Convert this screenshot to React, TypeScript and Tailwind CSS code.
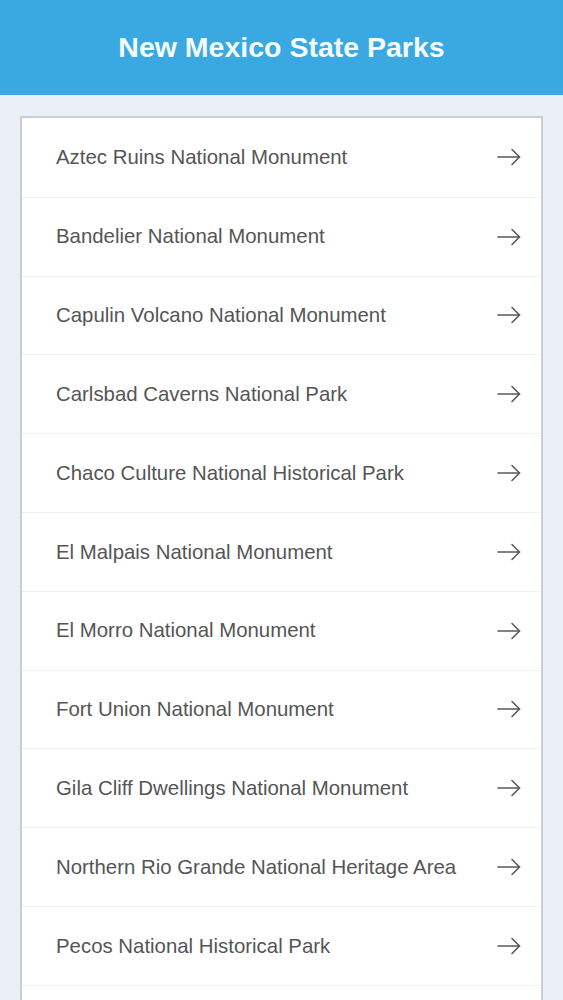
import React from "react";

const parks = [
  "Aztec Ruins National Monument",
  "Bandelier National Monument",
  "Capulin Volcano National Monument",
  "Carlsbad Caverns National Park",
  "Chaco Culture National Historical Park",
  "El Malpais National Monument",
  "El Morro National Monument",
  "Fort Union National Monument",
  "Gila Cliff Dwellings National Monument",
  "Northern Rio Grande National Heritage Area",
  "Pecos National Historical Park",
  "Petroglyph National Monument",
];

function Arrow() {
  return (
    <svg width="24" height="20" viewBox="0 0 24 20" fill="none" stroke="#5a5a5a" strokeWidth="1.6" strokeLinecap="round" strokeLinejoin="round">
      <line x1="1" y1="10" x2="22.5" y2="10" />
      <polyline points="15,2.5 22.5,10 15,17.5" />
    </svg>
  );
}

export default function App() {
  return (
    <div className="min-h-screen bg-[#eaf0f5]" style={{ fontFamily: '"Liberation Sans", Arial, sans-serif' }}>
      <header className="h-[95px] bg-[#3aa9e2] flex items-center justify-center">
        <h1 className="text-[#f4fcff] font-bold text-[28.5px] leading-none">New Mexico State Parks</h1>
      </header>
      <div className="px-5 pt-[21px]">
        <ul className="bg-white border-2 border-[#c9cdd6]">
          {parks.map((p, i) => (
            <li
              key={p}
              className={`h-[78.8px] flex items-center justify-between pl-[34px] pr-[20px] ${i > 0 ? "border-t border-[#f0f1f3]" : ""}`}
            >
              <span className="text-[20.4px] text-[#555555]">{p}</span>
              <Arrow />
            </li>
          ))}
        </ul>
      </div>
    </div>
  );
}
